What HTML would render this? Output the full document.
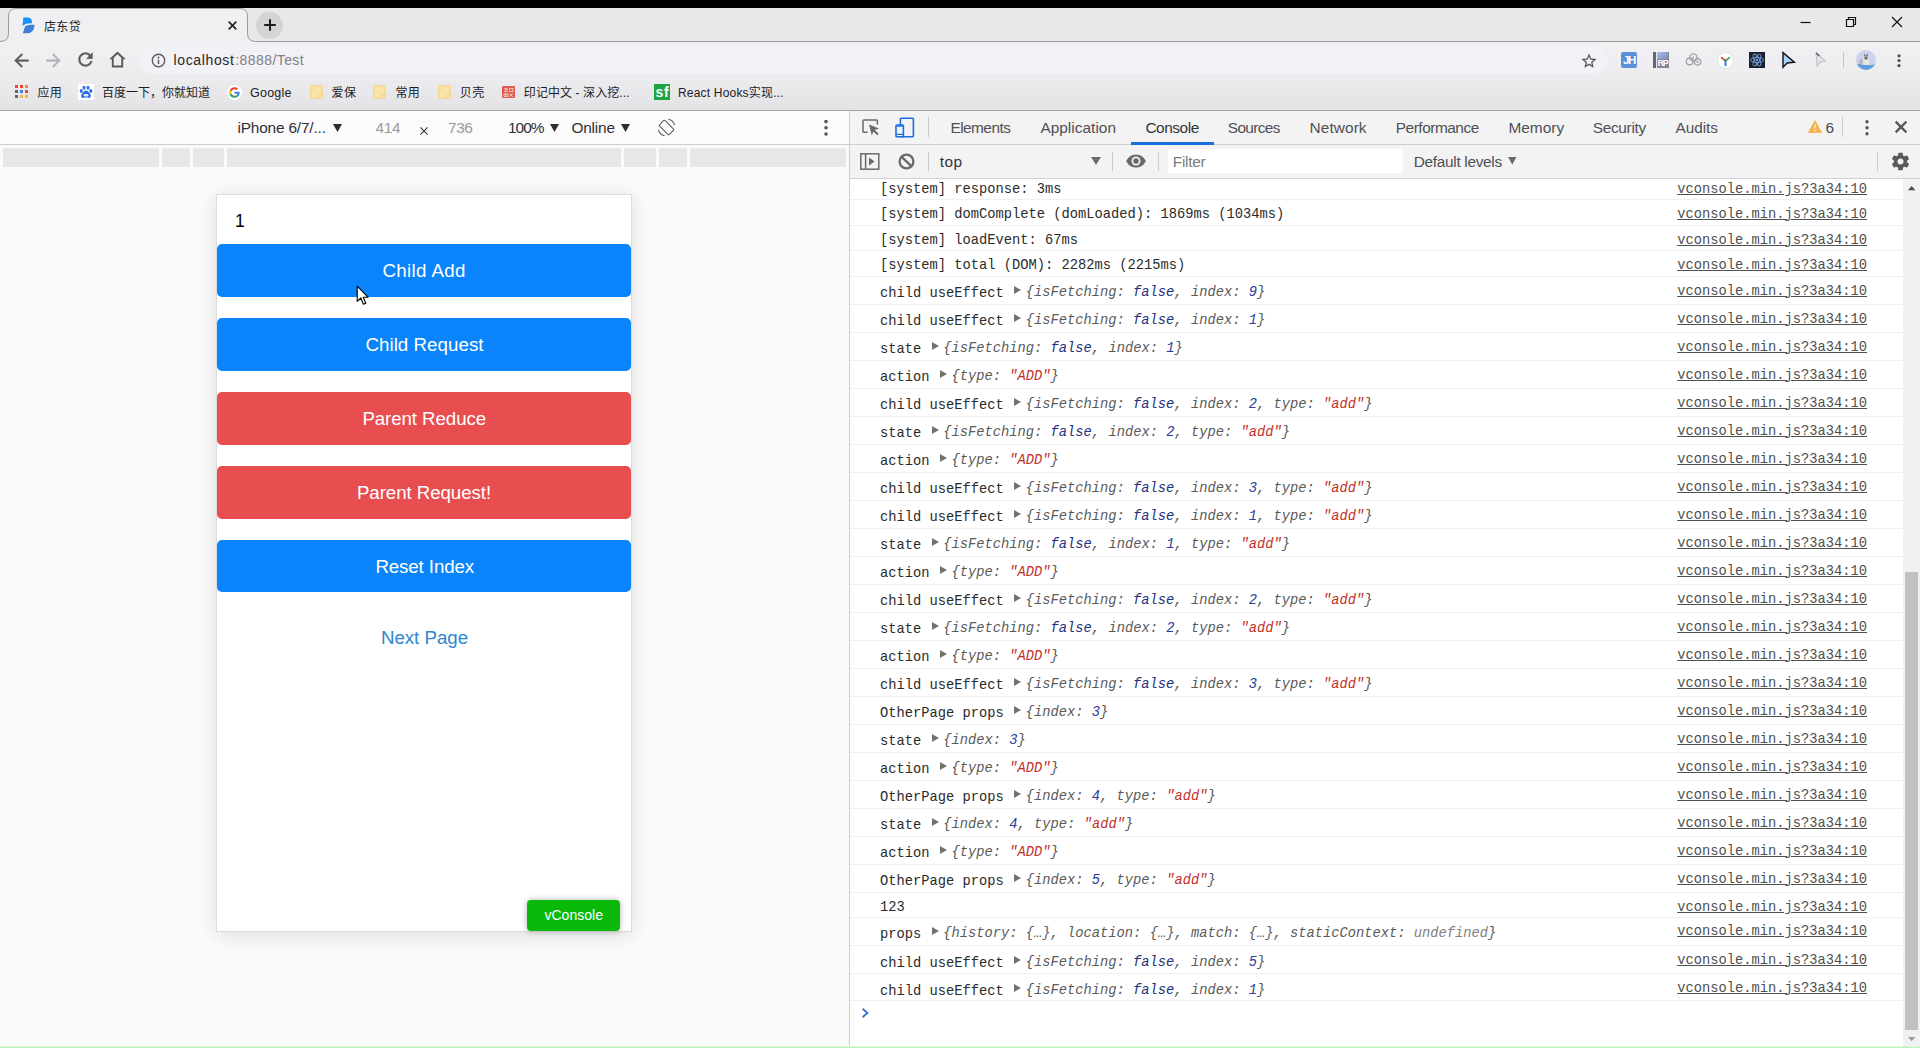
<!DOCTYPE html>
<html lang="zh"><head><meta charset="utf-8"><title>店东贷</title>
<style>
*{margin:0;padding:0;box-sizing:border-box}
html,body{width:1920px;height:1048px;overflow:hidden;background:#fff}
body{position:relative;font-family:"Liberation Sans","Noto Sans CJK SC",sans-serif}
.a{position:absolute}
.t{position:absolute;white-space:pre;display:block}
svg{position:absolute;overflow:visible}
.m{position:absolute;white-space:pre;font-family:"Liberation Mono","Noto Sans CJK SC",monospace;font-size:13.75px;line-height:16px;color:#2b2b2b}
.m i{color:#555}
.m .k{color:#5a5a5a}
.m .b{color:#22307c}
.m .n{color:#2a3c9c}
.m .s{color:#c2302a}
.m .u{color:#808080}
.lk{position:absolute;white-space:pre;font-family:"Liberation Mono",monospace;font-size:13.75px;line-height:16px;color:#4f4f4f;text-decoration:underline;right:53px}
.hl{position:absolute;left:850px;width:1053px;height:1px;background:#f0f0f2}
.tri{position:absolute;width:0;height:0;border-left:7.4px solid #727272;border-top:4.5px solid transparent;border-bottom:4.5px solid transparent}
.btn{position:absolute;left:217px;width:414px;height:52.6px;border-radius:5px}
.sep{position:absolute;width:1px;background:#cbcbcb}
</style></head><body>
<div class="a" style="left:0;top:0;width:1920px;height:8px;background:#000"></div><div class="a" style="left:0;top:8px;width:1920px;height:34px;background:#e8e7ea"></div><div class="a" style="left:0;top:42px;width:1920px;height:68px;background:linear-gradient(#f0eff2 0,#eeedf0 40%,#e9e8eb 70%,#e3e2e5 100%)"></div><svg style="left:0;top:0" width="1920" height="48"><path d="M0,41.5 Q8.5,41.5 8.5,33.5 L8.5,16.5 Q8.5,8.5 16.5,8.5 L239.5,8.5 Q247.5,8.5 247.5,16.5 L247.5,33.5 Q247.5,41.5 255.5,41.5 L255.5,42.5 L0,42.5 Z" fill="#f0eff2"/><path d="M0,41.5 Q8.5,41.5 8.5,33.5 L8.5,16.5 Q8.5,8.5 16.5,8.5 L239.5,8.5 Q247.5,8.5 247.5,16.5 L247.5,33.5 Q247.5,41.5 255.5,41.5 L1920,41.5" fill="none" stroke="#9a999c" stroke-width="1"/></svg><svg style="left:21px;top:16.6px" width="15" height="17.4" viewBox="0 0 15 18"><path d="M2.2,0.6 H6.2 C10.2,0.6 11.4,3.4 11.2,6.6 C7,6.4 3.6,7.2 1.2,9.2 C1.6,6.6 1.9,3.4 2.2,0.6 Z" fill="#1890ff"/><path d="M4.2,9.4 C7.4,8.2 10.6,7.8 13.6,8.0 C13.8,12.4 11.6,16.6 6.4,16.8 H1.6 Z" fill="#3f7fd6"/></svg><span class="t" style="left:43.90px;top:20.80px;font-size:12px;line-height:12px;color:#1f1f1f;letter-spacing:0.394px;">店东贷</span><svg style="left:227.5px;top:20.8px" width="9" height="9" viewBox="0 0 9 9"><path d="M0.7,0.7 L8.3,8.3 M8.3,0.7 L0.7,8.3" stroke="#2a2a2a" stroke-width="1.8"/></svg><div class="a" style="left:256.4px;top:11.5px;width:27px;height:27px;border-radius:14px;background:#d4d3d6"></div><svg style="left:263.9px;top:19px" width="12" height="12" viewBox="0 0 12 12"><path d="M6,0.2 V11.8 M0.2,6 H11.8" stroke="#1d1d1d" stroke-width="2"/></svg><svg style="left:1795px;top:12px" width="120" height="22" viewBox="0 0 120 22"><path d="M5.5,10.5 H15.5" stroke="#111" stroke-width="1.2"/><path d="M51.5,7.5 H58.5 V14.5 H51.5 Z M53.5,7.5 V5.5 H60.5 V12.5 H58.5" fill="none" stroke="#111" stroke-width="1.2"/><path d="M97,5 L107,15 M107,5 L97,15" stroke="#111" stroke-width="1.2"/></svg><svg style="left:11px;top:49.5px" width="21" height="21" viewBox="0 0 24 24"><path stroke="#5b5b5e" stroke-width="0.4" fill="#5b5b5e" d="M20 11H7.83l5.59-5.59L12 4l-8 8 8 8 1.41-1.41L7.83 13H20v-2z"/></svg><svg style="left:43px;top:49.5px" width="21" height="21" viewBox="0 0 24 24"><path stroke="#b3b2b7" stroke-width="0.4" fill="#b3b2b7" d="M12 4l-1.41 1.41L16.17 11H4v2h12.17l-5.58 5.59L12 20l8-8z"/></svg><svg style="left:75px;top:49.3px" width="21" height="21" viewBox="0 0 24 24"><path stroke="#5b5b5e" stroke-width="0.4" fill="#5b5b5e" d="M17.65 6.35C16.2 4.9 14.21 4 12 4c-4.42 0-7.99 3.58-7.99 8s3.57 8 7.99 8c3.73 0 6.84-2.55 7.73-6h-2.08c-.82 2.33-3.04 4-5.65 4-3.31 0-6-2.69-6-6s2.69-6 6-6c1.66 0 3.14.69 4.22 1.78L13 11h7V4l-2.35 2.35z"/></svg><svg style="left:107.3px;top:49.2px" width="21" height="22.4" viewBox="0 0 24 25.6"><path fill="#5b5b5e" fill-rule="evenodd" d="M12 3L2.4 11.8h3.1V21.2h13v-9.4h3.1L12 3z M12 6l4.3 3.9V19H7.7V9.9L12 6z"/></svg><div class="a" style="left:140px;top:46px;width:1467px;height:28px;border-radius:14px;background:#f2f1f5"></div><svg style="left:150.5px;top:52.5px" width="15" height="15" viewBox="0 0 15 15"><circle cx="7.5" cy="7.5" r="6.2" fill="none" stroke="#5b5b5e" stroke-width="1.4"/><path d="M7.5,6.6 V11" stroke="#5b5b5e" stroke-width="1.5"/><circle cx="7.5" cy="4.5" r="0.95" fill="#5b5b5e"/></svg><span class="t" style="left:173.60px;top:53.30px;font-size:14px;line-height:14px;color:#27272a;letter-spacing:0.628px;">localhost</span><span class="t" style="left:235.20px;top:53.30px;font-size:14px;line-height:14px;color:#808086;letter-spacing:0.431px;">:8888/Test</span><svg style="left:1580px;top:51.5px" width="18" height="18" viewBox="0 0 24 24"><path fill="#4d4d50" d="M22 9.24l-7.19-.62L12 2 9.19 8.63 2 9.24l5.46 4.73L5.82 21 12 17.27 18.18 21l-1.63-7.03L22 9.24zM12 15.4l-3.76 2.27 1-4.28-3.32-2.88 4.38-.38L12 6.1l1.71 4.04 4.38.38-3.32 2.88 1 4.28L12 15.4z"/></svg><div class="a" style="left:1621px;top:52px;width:16px;height:16px;border-radius:2px;background:#5a90d6"></div><span class="t" style="left:1623.00px;top:54.65px;font-size:11.5px;line-height:11.5px;color:#fff;font-weight:700;letter-spacing:-1.402px;">JH</span><div class="a" style="left:1652.6px;top:51.6px;width:17px;height:17px;background:#f3e6f3"></div><div class="a" style="left:1653px;top:52px;width:16px;height:16px;background:#84889c"></div><div class="a" style="left:1653px;top:52px;width:3px;height:16px;background:#66676c"></div><div class="a" style="left:1656px;top:52px;width:1px;height:16px;background:#e9e6ee"></div><div class="a" style="left:1657.4px;top:52.4px;width:11px;height:7px;background:linear-gradient(135deg,#a9bdf0,#7d8db4)"></div><span class="t" style="left:1657.40px;top:59.40px;font-size:9px;line-height:9px;color:#fff;font-weight:700;letter-spacing:-1.144px;">RP</span><svg style="left:1685px;top:52px" width="17" height="16" viewBox="0 0 17 16"><g fill="none" stroke="#a3a2a7" stroke-width="1.3"><circle cx="4.6" cy="9.6" r="3.4"/><circle cx="8.4" cy="5.4" r="3.6"/><circle cx="12.6" cy="9.8" r="3.2"/></g><circle cx="12.6" cy="9.8" r="1.1" fill="#9a999e"/><circle cx="8.2" cy="5.6" r="1" fill="#9a999e"/></svg><svg style="left:1716.5px;top:51.5px" width="17" height="17" viewBox="0 0 17 17"><circle cx="8.5" cy="8.5" r="8" fill="#fff" stroke="#d8d7da" stroke-width="0.8"/><path d="M8.5,8.8 L4.6,5.6" stroke="#d8463b" stroke-width="1.8" stroke-linecap="round"/><path d="M8.5,8.8 L12.4,5.6" stroke="#3aa657" stroke-width="1.8" stroke-linecap="round"/><path d="M8.5,8.8 V13.4" stroke="#2f7be0" stroke-width="1.9" stroke-linecap="round"/></svg><svg style="left:1749px;top:52px" width="16" height="16" viewBox="0 0 16 16"><rect width="16" height="16" fill="#1d1f27"/><g fill="none" stroke="#6fa3e4" stroke-width="0.9"><ellipse cx="8" cy="8" rx="6.6" ry="2.5"/><ellipse cx="8" cy="8" rx="6.6" ry="2.5" transform="rotate(60 8 8)"/><ellipse cx="8" cy="8" rx="6.6" ry="2.5" transform="rotate(120 8 8)"/></g><circle cx="8" cy="8" r="1.3" fill="#6fa3e4"/></svg><svg style="left:1781px;top:51px" width="16" height="18" viewBox="0 0 16 18"><path d="M2,1.6 L13.4,11.2 L6.2,12 L2,16.2 Z" fill="#a6d2f4" stroke="#111116" stroke-width="1.4" stroke-linejoin="miter"/></svg><svg style="left:1813px;top:51px" width="16" height="18" viewBox="0 0 16 18"><path d="M3,2 L12.6,10.2 L7.4,10.6 L4.2,15.2 Z" fill="#e4e4ea" stroke="#c3c2c8" stroke-width="1.1" stroke-linejoin="round"/><path d="M3,2 L6.5,5" stroke="#55555c" stroke-width="1.4"/></svg><div class="sep" style="left:1843px;top:52px;height:16px;background:#c6c5c9"></div><svg style="left:1856px;top:50px" width="20" height="20" viewBox="0 0 20 20"><defs><clipPath id="av"><circle cx="10" cy="10" r="10"/></clipPath></defs><g clip-path="url(#av)"><rect width="20" height="20" fill="#ccd1ee"/><path d="M0,15 Q5,13 10,14.5 T20,14 V20 H0 Z" fill="#5f9fe0"/><ellipse cx="5.5" cy="12" rx="2.6" ry="2.8" fill="#b9b9c2"/><path d="M7,15 C6.5,10 7.5,6 10,5.5 C12.5,6 13.5,10 13,15 Z" fill="#e9e4de"/><path d="M8.2,6.6 L8.6,3.6 L9.8,5.8 Z M11.8,6.6 L11.4,3.6 L10.2,5.8 Z" fill="#5a5560"/><ellipse cx="10" cy="8" rx="1.7" ry="1.8" fill="#6c6770"/></g></svg><svg style="left:1895.5px;top:53px" width="6" height="16" viewBox="0 0 6 16"><circle cx="3" cy="2.8" r="1.6" fill="#4d4d50"/><circle cx="3" cy="7.6" r="1.6" fill="#4d4d50"/><circle cx="3" cy="12.6" r="1.6" fill="#4d4d50"/></svg><svg style="left:15px;top:84.5px" width="13" height="13" viewBox="0 0 13 13"><rect x="0" y="0" width="3" height="3" fill="#e04a3f"/><rect x="5" y="0" width="3" height="3" fill="#e04a3f"/><rect x="10" y="0" width="3" height="3" fill="#e88a3c"/><rect x="0" y="5" width="3" height="3" fill="#5b6770"/><rect x="5" y="5" width="3" height="3" fill="#3f7fe0"/><rect x="10" y="5" width="3" height="3" fill="#e04a3f"/><rect x="0" y="10" width="3" height="3" fill="#5b6770"/><rect x="5" y="10" width="3" height="3" fill="#f0b44a"/><rect x="10" y="10" width="3" height="3" fill="#f0b44a"/></svg><span class="t" style="left:37.40px;top:87.20px;font-size:12px;line-height:12px;color:#1d1d1f;letter-spacing:0.456px;">应用</span><svg style="left:78px;top:84px" width="16" height="16" viewBox="0 0 16 16"><rect width="16" height="16" fill="#fff"/><g fill="#2d6be8"><ellipse cx="3.2" cy="7" rx="1.5" ry="2"/><ellipse cx="6" cy="3.8" rx="1.5" ry="2"/><ellipse cx="10" cy="3.8" rx="1.5" ry="2"/><ellipse cx="12.8" cy="7" rx="1.5" ry="2"/><path d="M8,6.6 C10,6.6 11,8.6 12.2,10 C13.6,11.6 12.8,14 10.8,14 C9.6,14 9,13.6 8,13.6 C7,13.6 6.4,14 5.2,14 C3.2,14 2.4,11.6 3.8,10 C5,8.6 6,6.6 8,6.6 Z"/></g><rect x="5.6" y="10" width="4.8" height="2.6" rx="0.8" fill="#fff" opacity="0.85"/></svg><span class="t" style="left:101.90px;top:87.20px;font-size:12px;line-height:12px;color:#1d1d1f;letter-spacing:0.010px;">百度一下，你就知道</span><svg style="left:226.5px;top:84.5px" width="15" height="15" viewBox="0 0 48 48"><circle cx="24" cy="24" r="24" fill="#fff"/><g transform="translate(7 7) scale(0.71)"><path fill="#EA4335" d="M24 9.5c3.54 0 6.71 1.22 9.21 3.6l6.85-6.85C35.9 2.38 30.47 0 24 0 14.62 0 6.51 5.38 2.56 13.22l7.98 6.19C12.43 13.72 17.74 9.5 24 9.5z"/><path fill="#4285F4" d="M46.98 24.55c0-1.57-.15-3.09-.38-4.55H24v9.02h12.94c-.58 2.96-2.26 5.48-4.78 7.18l7.73 6c4.51-4.18 7.09-10.36 7.09-17.65z"/><path fill="#FBBC05" d="M10.53 28.59c-.48-1.45-.76-2.99-.76-4.59s.27-3.14.76-4.59l-7.98-6.19C.92 16.46 0 20.12 0 24c0 3.88.92 7.54 2.56 10.78l7.97-6.19z"/><path fill="#34A853" d="M24 48c6.48 0 11.93-2.13 15.89-5.81l-7.73-6c-2.15 1.45-4.92 2.3-8.16 2.3-6.26 0-11.57-4.22-13.47-9.91l-7.98 6.19C6.51 42.62 14.62 48 24 48z"/></g></svg><span class="t" style="left:250.00px;top:86.75px;font-size:12.5px;line-height:12.5px;color:#1d1d1f;letter-spacing:0.234px;">Google</span><svg style="left:309.6px;top:85px" width="13" height="14" viewBox="0 0 13 14"><path d="M0.8,0.8 H12.2 V13.2 H0.8 Z" fill="#fbe5a6" stroke="#f3cf7c" stroke-width="1"/><path d="M9.2,13 V10 H12" fill="none" stroke="#f3cf7c" stroke-width="1"/></svg><span class="t" style="left:331.40px;top:87.20px;font-size:12px;line-height:12px;color:#1d1d1f;letter-spacing:0.656px;">爱保</span><svg style="left:373px;top:85px" width="13" height="14" viewBox="0 0 13 14"><path d="M0.8,0.8 H12.2 V13.2 H0.8 Z" fill="#fbe5a6" stroke="#f3cf7c" stroke-width="1"/><path d="M9.2,13 V10 H12" fill="none" stroke="#f3cf7c" stroke-width="1"/></svg><span class="t" style="left:395.40px;top:87.20px;font-size:12px;line-height:12px;color:#1d1d1f;letter-spacing:0.390px;">常用</span><svg style="left:437.6px;top:85px" width="13" height="14" viewBox="0 0 13 14"><path d="M0.8,0.8 H12.2 V13.2 H0.8 Z" fill="#fbe5a6" stroke="#f3cf7c" stroke-width="1"/><path d="M9.2,13 V10 H12" fill="none" stroke="#f3cf7c" stroke-width="1"/></svg><span class="t" style="left:459.80px;top:87.20px;font-size:12px;line-height:12px;color:#1d1d1f;letter-spacing:0.523px;">贝壳</span><svg style="left:501.5px;top:86px" width="13" height="12" viewBox="0 0 13 12"><rect width="13" height="12" rx="1" fill="#e0584e"/><g stroke="#f7d8d4" stroke-width="0.9" fill="none"><path d="M2,3 H6 M2,5.6 H6 M4,2 V5.6 M7.6,2.4 H11 V5.6 H7.6 Z M2,8 H6 V10.4 H2 Z M4,7 V11 M7.4,7.4 L11,10.8 M11,7.4 L7.4,10.8"/></g></svg><span class="t" style="left:523.80px;top:87.20px;font-size:12px;line-height:12px;color:#1d1d1f;letter-spacing:0.090px;">印记中文 - 深入挖...</span><div class="a" style="left:654px;top:84px;width:16px;height:16px;background:#1ea446"></div><span class="t" style="left:655.40px;top:85.00px;font-size:14px;line-height:14px;color:#fff;font-weight:700;letter-spacing:0.765px;">sf</span><span class="t" style="left:678.00px;top:87.20px;font-size:12px;line-height:12px;color:#1d1d1f;letter-spacing:0.187px;">React Hooks实现...</span><div class="a" style="left:0;top:110px;width:1920px;height:1px;background:#a6a5a8"></div><div class="a" style="left:0;top:111px;width:849px;height:34px;background:#fbfbfb"></div><div class="a" style="left:0;top:144px;width:849px;height:1px;background:#cfcfcf"></div><div class="a" style="left:0;top:145px;width:849px;height:903px;background:#fafafa"></div><span class="t" style="left:237.40px;top:119.80px;font-size:15.4px;line-height:15.4px;color:#303034;letter-spacing:-0.163px;">iPhone 6/7/...</span><svg style="left:332.5px;top:124px" width="9" height="8" viewBox="0 0 9 8"><path d="M0,0 H9 L4.5,8 Z" fill="#2c2c30"/></svg><span class="t" style="left:375.40px;top:119.80px;font-size:15.4px;line-height:15.4px;color:#9a9a9a;letter-spacing:-0.195px;">414</span><svg style="left:420px;top:126.5px" width="8" height="8" viewBox="0 0 8 8"><path d="M0.4,0.4 L7.6,7.6 M7.6,0.4 L0.4,7.6" stroke="#3a3a3e" stroke-width="1.1"/></svg><span class="t" style="left:448.10px;top:119.80px;font-size:15.4px;line-height:15.4px;color:#9a9a9a;letter-spacing:-0.475px;">736</span><span class="t" style="left:508.00px;top:119.80px;font-size:15.4px;line-height:15.4px;color:#303034;letter-spacing:-0.936px;">100%</span><svg style="left:550px;top:124px" width="9" height="8" viewBox="0 0 9 8"><path d="M0,0 H9 L4.5,8 Z" fill="#2c2c30"/></svg><span class="t" style="left:571.40px;top:119.80px;font-size:15.4px;line-height:15.4px;color:#303034;letter-spacing:-0.164px;">Online</span><svg style="left:621px;top:124px" width="9" height="8" viewBox="0 0 9 8"><path d="M0,0 H9 L4.5,8 Z" fill="#2c2c30"/></svg><svg style="left:657px;top:117.5px" width="19" height="19" viewBox="0 0 19 19"><g fill="none" stroke="#5f5f63" stroke-width="1.1"><rect x="5.6" y="2.6" width="7.8" height="13.8" rx="1.2" transform="rotate(-45 9.5 9.5)"/><path d="M1.4,12 A8.4,8.4 0 0 0 7.6,17.8"/><path d="M17.6,7 A8.4,8.4 0 0 0 11.4,1.2"/></g></svg><svg style="left:822.8px;top:118.8px" width="6" height="18" viewBox="0 0 6 18"><circle cx="3" cy="2.6" r="1.8" fill="#55555a"/><circle cx="3" cy="8.8" r="1.8" fill="#55555a"/><circle cx="3" cy="15" r="1.8" fill="#55555a"/></svg><div class="a" style="left:3px;top:148px;width:156px;height:18.5px;background:#e7e6e9"></div><div class="a" style="left:162px;top:148px;width:28px;height:18.5px;background:#e7e6e9"></div><div class="a" style="left:193px;top:148px;width:31px;height:18.5px;background:#e7e6e9"></div><div class="a" style="left:227.2px;top:148px;width:393.8px;height:18.5px;background:#e7e6e9"></div><div class="a" style="left:624px;top:148px;width:31.6px;height:18.5px;background:#e7e6e9"></div><div class="a" style="left:659px;top:148px;width:28px;height:18.5px;background:#e7e6e9"></div><div class="a" style="left:690px;top:148px;width:156px;height:18.5px;background:#e7e6e9"></div><div class="a" style="left:216px;top:194px;width:416px;height:738px;background:#fff;border:1px solid #dcdcde;box-shadow:0 0 18px rgba(0,0,0,0.07),0 8px 22px rgba(0,0,0,0.05)"></div><span class="t" style="left:235.00px;top:212.75px;font-size:17.5px;line-height:17.5px;color:#000;">1</span><div class="btn" style="top:244px;background:#0a84fa"></div><span class="t" style="left:382.40px;top:262.25px;font-size:18.7px;line-height:18.7px;color:#fff;letter-spacing:0.376px;">Child Add</span><div class="btn" style="top:318px;background:#0a84fa"></div><span class="t" style="left:365.40px;top:336.25px;font-size:18.7px;line-height:18.7px;color:#fff;letter-spacing:0.065px;">Child Request</span><div class="btn" style="top:392px;background:#e84e50"></div><span class="t" style="left:362.40px;top:410.25px;font-size:18.7px;line-height:18.7px;color:#fff;letter-spacing:-0.078px;">Parent Reduce</span><div class="btn" style="top:466px;background:#e84e50"></div><span class="t" style="left:356.90px;top:484.25px;font-size:18.7px;line-height:18.7px;color:#fff;letter-spacing:-0.058px;">Parent Request!</span><div class="btn" style="top:540px;background:#0a84fa;height:51.7px"></div><span class="t" style="left:375.40px;top:558.25px;font-size:18.7px;line-height:18.7px;color:#fff;letter-spacing:-0.099px;">Reset Index</span><span class="t" style="left:380.90px;top:629.45px;font-size:18.7px;line-height:18.7px;color:#2f86cc;letter-spacing:-0.008px;">Next Page</span><div class="a" style="left:527px;top:900px;width:93px;height:30.5px;border-radius:4px;background:#0aba0a;box-shadow:0 0 6px rgba(0,0,0,0.3)"></div><span class="t" style="left:544.40px;top:908.20px;font-size:14px;line-height:14px;color:#fff;letter-spacing:0.043px;">vConsole</span><svg style="left:356px;top:285px" width="14" height="21" viewBox="0 0 14 21"><path d="M1.2,1.2 V16.4 L4.8,13 L7.4,19.2 L9.8,18.2 L7.2,12.2 H12 Z" fill="#fff" stroke="#000" stroke-width="1.1" stroke-linejoin="round"/></svg><div class="a" style="left:849px;top:111px;width:1px;height:937px;background:#cdcdcd"></div><div class="a" style="left:850px;top:111px;width:1070px;height:68px;background:#f3f3f3"></div><div class="a" style="left:850px;top:144px;width:1070px;height:1px;background:#cfcfcf"></div><div class="a" style="left:850px;top:178px;width:1070px;height:1px;background:#d0d0d0"></div><svg style="left:862px;top:119px" width="19" height="17" viewBox="0 0 19 17"><path d="M5.6,13.2 H1.8 A0.8,0.8 0 0 1 1,12.4 V1.8 A0.8,0.8 0 0 1 1.8,1 H14.6 A0.8,0.8 0 0 1 15.4,1.8 V5.6" fill="none" stroke="#6a6a6a" stroke-width="1.5"/><path d="M7,5.6 L17,9.4 L12.8,11 L16.6,14.8 L15.2,16.2 L11.4,12.4 L9.8,16.4 Z" fill="#6a6a6a"/></svg><svg style="left:895px;top:116.5px" width="20" height="21" viewBox="0 0 20 21"><g fill="none" stroke="#1a6fe0" stroke-width="1.6"><rect x="5.4" y="1.2" width="13" height="18.6" rx="1"/><rect x="1" y="8" width="7.4" height="11.8" rx="0.8" fill="#f3f3f3"/></g><path d="M1.6,9 H7.8 M1.6,17.4 H7.8" stroke="#1a6fe0" stroke-width="1.4"/></svg><div class="sep" style="left:928px;top:117px;height:20px"></div><span class="t" style="left:950.40px;top:119.50px;font-size:15.4px;line-height:15.4px;color:#505056;letter-spacing:-0.527px;">Elements</span><span class="t" style="left:1040.40px;top:119.50px;font-size:15.4px;line-height:15.4px;color:#505056;letter-spacing:0.029px;">Application</span><span class="t" style="left:1145.40px;top:119.50px;font-size:15.4px;line-height:15.4px;color:#33333a;letter-spacing:-0.441px;">Console</span><span class="t" style="left:1227.80px;top:119.50px;font-size:15.4px;line-height:15.4px;color:#505056;letter-spacing:-0.626px;">Sources</span><span class="t" style="left:1309.60px;top:119.50px;font-size:15.4px;line-height:15.4px;color:#505056;letter-spacing:0.084px;">Network</span><span class="t" style="left:1395.80px;top:119.50px;font-size:15.4px;line-height:15.4px;color:#505056;letter-spacing:-0.468px;">Performance</span><span class="t" style="left:1508.40px;top:119.50px;font-size:15.4px;line-height:15.4px;color:#505056;letter-spacing:0.037px;">Memory</span><span class="t" style="left:1592.80px;top:119.50px;font-size:15.4px;line-height:15.4px;color:#505056;letter-spacing:-0.321px;">Security</span><span class="t" style="left:1675.60px;top:119.50px;font-size:15.4px;line-height:15.4px;color:#505056;letter-spacing:-0.069px;">Audits</span><div class="a" style="left:1131px;top:142px;width:83px;height:2.6px;background:#1a6fe0"></div><svg style="left:1807.5px;top:120px" width="14" height="13" viewBox="0 0 14 13"><path d="M7,0.8 L13.4,12.4 H0.6 Z" fill="#f6b34f" stroke="#f6b34f" stroke-width="1" stroke-linejoin="round"/><path d="M7,4.2 V8.4" stroke="#fdf0d8" stroke-width="1.3"/><circle cx="7" cy="10.4" r="0.8" fill="#fdf0d8"/></svg><span class="t" style="left:1825.60px;top:119.50px;font-size:15.4px;line-height:15.4px;color:#4a4a50;letter-spacing:-0.363px;">6</span><div class="sep" style="left:1842px;top:117px;height:20px"></div><svg style="left:1863.5px;top:118.6px" width="6" height="18" viewBox="0 0 6 18"><circle cx="3" cy="2.8" r="1.7" fill="#55555a"/><circle cx="3" cy="8.8" r="1.7" fill="#55555a"/><circle cx="3" cy="14.8" r="1.7" fill="#55555a"/></svg><svg style="left:1894.5px;top:121px" width="12" height="12" viewBox="0 0 12 12"><path d="M0.6,0.6 L11.4,11.4 M11.4,0.6 L0.6,11.4" stroke="#55555a" stroke-width="2.2"/></svg><svg style="left:860px;top:153px" width="20" height="17" viewBox="0 0 20 17"><rect x="0.8" y="0.8" width="18" height="15.4" fill="none" stroke="#6a6a6a" stroke-width="1.5"/><path d="M5.6,0.8 V16.2" stroke="#6a6a6a" stroke-width="1.5"/><path d="M9,4.4 L14.6,8.5 L9,12.6 Z" fill="#6a6a6a"/></svg><svg style="left:897.5px;top:153px" width="17" height="17" viewBox="0 0 17 17"><circle cx="8.5" cy="8.5" r="6.9" fill="none" stroke="#6a6a6a" stroke-width="2.3"/><path d="M3.6,3.8 L13.4,13.2" stroke="#6a6a6a" stroke-width="2.3"/></svg><div class="sep" style="left:928px;top:152px;height:19px"></div><span class="t" style="left:939.80px;top:154.00px;font-size:15.4px;line-height:15.4px;color:#33333a;letter-spacing:0.398px;">top</span><svg style="left:1090.5px;top:157px" width="10" height="8" viewBox="0 0 10 8"><path d="M0,0 H10 L5,8 Z" fill="#6a6a6a"/></svg><div class="sep" style="left:1112px;top:152px;height:19px"></div><svg style="left:1125.5px;top:154px" width="20" height="14" viewBox="0 0 20 14"><path d="M10,0.4 C5.4,0.4 1.8,3.2 0.2,7 C1.8,10.8 5.4,13.6 10,13.6 C14.6,13.6 18.2,10.8 19.8,7 C18.2,3.2 14.6,0.4 10,0.4 Z" fill="#6a6a6a"/><circle cx="10" cy="7" r="4.5" fill="#f3f3f3"/><circle cx="10" cy="7" r="2.7" fill="#6a6a6a"/></svg><div class="sep" style="left:1158px;top:152px;height:19px"></div><div class="a" style="left:1168px;top:149px;width:235px;height:24px;background:#fff"></div><span class="t" style="left:1172.80px;top:154.00px;font-size:15.4px;line-height:15.4px;color:#7b7b7b;letter-spacing:-0.255px;">Filter</span><span class="t" style="left:1413.80px;top:154.00px;font-size:15.4px;line-height:15.4px;color:#505056;letter-spacing:-0.310px;">Default levels</span><svg style="left:1508px;top:157px" width="8.5" height="7.5" viewBox="0 0 9 8"><path d="M0,0 H9 L4.5,8 Z" fill="#6a6a6e"/></svg><div class="sep" style="left:1877px;top:152px;height:19px"></div><svg style="left:1889.9px;top:150.6px" width="21" height="21" viewBox="0 0 24 24"><path fill="#5a5a5e" d="M19.43 12.98c.04-.32.07-.64.07-.98s-.03-.66-.07-.98l2.11-1.65c.19-.15.24-.42.12-.64l-2-3.46c-.12-.22-.39-.3-.61-.22l-2.49 1c-.52-.4-1.08-.73-1.69-.98l-.38-2.65C14.46 2.18 14.25 2 14 2h-4c-.25 0-.46.18-.49.42l-.38 2.65c-.61.25-1.17.59-1.69.98l-2.49-1c-.23-.09-.49 0-.61.22l-2 3.46c-.13.22-.07.49.12.64l2.11 1.65c-.04.32-.07.65-.07.98s.03.66.07.98l-2.11 1.65c-.19.15-.24.42-.12.64l2 3.46c.12.22.39.3.61.22l2.49-1c.52.4 1.08.73 1.69.98l.38 2.65c.03.24.24.42.49.42h4c.25 0 .46-.18.49-.42l.38-2.65c.61-.25 1.17-.59 1.69-.98l2.49 1c.23.09.49 0 .61-.22l2-3.46c.12-.22.07-.49-.12-.64l-2.11-1.65zM12 15.5c-1.93 0-3.5-1.57-3.5-3.5s1.57-3.5 3.5-3.5 3.5 1.57 3.5 3.5-1.57 3.5-3.5 3.5z"/></svg><div class="a" style="left:850px;top:179px;width:1053px;height:869px;background:#fff"></div><div class="a" style="left:1903px;top:179px;width:17px;height:869px;background:#f1f1f3"></div><div class="a" style="left:1905px;top:572px;width:13px;height:458px;background:#c1c1c1"></div><svg style="left:1907.8px;top:185.7px" width="7.4" height="4.3" viewBox="0 0 9 5"><path d="M0,5 L4.5,0 L9,5 Z" fill="#4d4d4d"/></svg><svg style="left:1907.8px;top:1037px" width="7.4" height="4.2" viewBox="0 0 9 5"><path d="M0,0 L4.5,5 L9,0 Z" fill="#9a9a9a"/></svg><div class="hl" style="top:199px"></div><div class="m" style="left:880px;top:182.24px">[system] response: 3ms</div><div class="lk" style="top:182.24px">vconsole.min.js?3a34:10</div><div class="hl" style="top:225px"></div><div class="m" style="left:880px;top:206.74px">[system] domComplete (domLoaded): 1869ms (1034ms)</div><div class="lk" style="top:206.74px">vconsole.min.js?3a34:10</div><div class="hl" style="top:250px"></div><div class="m" style="left:880px;top:232.64px">[system] loadEvent: 67ms</div><div class="lk" style="top:232.64px">vconsole.min.js?3a34:10</div><div class="hl" style="top:276px"></div><div class="m" style="left:880px;top:257.54px">[system] total (DOM): 2282ms (2215ms)</div><div class="lk" style="top:257.54px">vconsole.min.js?3a34:10</div><div class="hl" style="top:304px"></div><div class="m" style="left:880px;top:286.04px">child useEffect</div><div class="tri" style="left:1014.10px;top:286.00px"></div><div class="m" style="left:1025.80px;top:285.14px"><i>{<span class="k">isFetching: </span><span class="b">false</span>, <span class="k">index: </span><span class="n">9</span>}</i></div><div class="lk" style="top:283.64px">vconsole.min.js?3a34:10</div><div class="hl" style="top:332px"></div><div class="m" style="left:880px;top:314.04px">child useEffect</div><div class="tri" style="left:1014.10px;top:314.00px"></div><div class="m" style="left:1025.80px;top:313.14px"><i>{<span class="k">isFetching: </span><span class="b">false</span>, <span class="k">index: </span><span class="n">1</span>}</i></div><div class="lk" style="top:311.64px">vconsole.min.js?3a34:10</div><div class="hl" style="top:360px"></div><div class="m" style="left:880px;top:342.04px">state</div><div class="tri" style="left:931.60px;top:342.00px"></div><div class="m" style="left:943.30px;top:341.14px"><i>{<span class="k">isFetching: </span><span class="b">false</span>, <span class="k">index: </span><span class="n">1</span>}</i></div><div class="lk" style="top:339.64px">vconsole.min.js?3a34:10</div><div class="hl" style="top:388px"></div><div class="m" style="left:880px;top:370.04px">action</div><div class="tri" style="left:939.85px;top:370.00px"></div><div class="m" style="left:951.55px;top:369.14px"><i>{<span class="k">type: </span><span class="s">&quot;ADD&quot;</span>}</i></div><div class="lk" style="top:367.64px">vconsole.min.js?3a34:10</div><div class="hl" style="top:416px"></div><div class="m" style="left:880px;top:398.04px">child useEffect</div><div class="tri" style="left:1014.10px;top:398.00px"></div><div class="m" style="left:1025.80px;top:397.14px"><i>{<span class="k">isFetching: </span><span class="b">false</span>, <span class="k">index: </span><span class="n">2</span>, <span class="k">type: </span><span class="s">&quot;add&quot;</span>}</i></div><div class="lk" style="top:395.64px">vconsole.min.js?3a34:10</div><div class="hl" style="top:444px"></div><div class="m" style="left:880px;top:426.04px">state</div><div class="tri" style="left:931.60px;top:426.00px"></div><div class="m" style="left:943.30px;top:425.14px"><i>{<span class="k">isFetching: </span><span class="b">false</span>, <span class="k">index: </span><span class="n">2</span>, <span class="k">type: </span><span class="s">&quot;add&quot;</span>}</i></div><div class="lk" style="top:423.64px">vconsole.min.js?3a34:10</div><div class="hl" style="top:472px"></div><div class="m" style="left:880px;top:454.04px">action</div><div class="tri" style="left:939.85px;top:454.00px"></div><div class="m" style="left:951.55px;top:453.14px"><i>{<span class="k">type: </span><span class="s">&quot;ADD&quot;</span>}</i></div><div class="lk" style="top:451.64px">vconsole.min.js?3a34:10</div><div class="hl" style="top:500px"></div><div class="m" style="left:880px;top:482.04px">child useEffect</div><div class="tri" style="left:1014.10px;top:482.00px"></div><div class="m" style="left:1025.80px;top:481.14px"><i>{<span class="k">isFetching: </span><span class="b">false</span>, <span class="k">index: </span><span class="n">3</span>, <span class="k">type: </span><span class="s">&quot;add&quot;</span>}</i></div><div class="lk" style="top:479.64px">vconsole.min.js?3a34:10</div><div class="hl" style="top:528px"></div><div class="m" style="left:880px;top:510.04px">child useEffect</div><div class="tri" style="left:1014.10px;top:510.00px"></div><div class="m" style="left:1025.80px;top:509.14px"><i>{<span class="k">isFetching: </span><span class="b">false</span>, <span class="k">index: </span><span class="n">1</span>, <span class="k">type: </span><span class="s">&quot;add&quot;</span>}</i></div><div class="lk" style="top:507.64px">vconsole.min.js?3a34:10</div><div class="hl" style="top:556px"></div><div class="m" style="left:880px;top:538.04px">state</div><div class="tri" style="left:931.60px;top:538.00px"></div><div class="m" style="left:943.30px;top:537.14px"><i>{<span class="k">isFetching: </span><span class="b">false</span>, <span class="k">index: </span><span class="n">1</span>, <span class="k">type: </span><span class="s">&quot;add&quot;</span>}</i></div><div class="lk" style="top:535.64px">vconsole.min.js?3a34:10</div><div class="hl" style="top:584px"></div><div class="m" style="left:880px;top:566.04px">action</div><div class="tri" style="left:939.85px;top:566.00px"></div><div class="m" style="left:951.55px;top:565.14px"><i>{<span class="k">type: </span><span class="s">&quot;ADD&quot;</span>}</i></div><div class="lk" style="top:563.64px">vconsole.min.js?3a34:10</div><div class="hl" style="top:612px"></div><div class="m" style="left:880px;top:594.04px">child useEffect</div><div class="tri" style="left:1014.10px;top:594.00px"></div><div class="m" style="left:1025.80px;top:593.14px"><i>{<span class="k">isFetching: </span><span class="b">false</span>, <span class="k">index: </span><span class="n">2</span>, <span class="k">type: </span><span class="s">&quot;add&quot;</span>}</i></div><div class="lk" style="top:591.64px">vconsole.min.js?3a34:10</div><div class="hl" style="top:640px"></div><div class="m" style="left:880px;top:622.04px">state</div><div class="tri" style="left:931.60px;top:622.00px"></div><div class="m" style="left:943.30px;top:621.14px"><i>{<span class="k">isFetching: </span><span class="b">false</span>, <span class="k">index: </span><span class="n">2</span>, <span class="k">type: </span><span class="s">&quot;add&quot;</span>}</i></div><div class="lk" style="top:619.64px">vconsole.min.js?3a34:10</div><div class="hl" style="top:668px"></div><div class="m" style="left:880px;top:650.04px">action</div><div class="tri" style="left:939.85px;top:650.00px"></div><div class="m" style="left:951.55px;top:649.14px"><i>{<span class="k">type: </span><span class="s">&quot;ADD&quot;</span>}</i></div><div class="lk" style="top:647.64px">vconsole.min.js?3a34:10</div><div class="hl" style="top:696px"></div><div class="m" style="left:880px;top:678.04px">child useEffect</div><div class="tri" style="left:1014.10px;top:678.00px"></div><div class="m" style="left:1025.80px;top:677.14px"><i>{<span class="k">isFetching: </span><span class="b">false</span>, <span class="k">index: </span><span class="n">3</span>, <span class="k">type: </span><span class="s">&quot;add&quot;</span>}</i></div><div class="lk" style="top:675.64px">vconsole.min.js?3a34:10</div><div class="hl" style="top:724px"></div><div class="m" style="left:880px;top:706.04px">OtherPage props</div><div class="tri" style="left:1014.10px;top:706.00px"></div><div class="m" style="left:1025.80px;top:705.14px"><i>{<span class="k">index: </span><span class="n">3</span>}</i></div><div class="lk" style="top:703.64px">vconsole.min.js?3a34:10</div><div class="hl" style="top:752px"></div><div class="m" style="left:880px;top:734.04px">state</div><div class="tri" style="left:931.60px;top:734.00px"></div><div class="m" style="left:943.30px;top:733.14px"><i>{<span class="k">index: </span><span class="n">3</span>}</i></div><div class="lk" style="top:731.64px">vconsole.min.js?3a34:10</div><div class="hl" style="top:780px"></div><div class="m" style="left:880px;top:762.04px">action</div><div class="tri" style="left:939.85px;top:762.00px"></div><div class="m" style="left:951.55px;top:761.14px"><i>{<span class="k">type: </span><span class="s">&quot;ADD&quot;</span>}</i></div><div class="lk" style="top:759.64px">vconsole.min.js?3a34:10</div><div class="hl" style="top:808px"></div><div class="m" style="left:880px;top:790.04px">OtherPage props</div><div class="tri" style="left:1014.10px;top:790.00px"></div><div class="m" style="left:1025.80px;top:789.14px"><i>{<span class="k">index: </span><span class="n">4</span>, <span class="k">type: </span><span class="s">&quot;add&quot;</span>}</i></div><div class="lk" style="top:787.64px">vconsole.min.js?3a34:10</div><div class="hl" style="top:836px"></div><div class="m" style="left:880px;top:818.04px">state</div><div class="tri" style="left:931.60px;top:818.00px"></div><div class="m" style="left:943.30px;top:817.14px"><i>{<span class="k">index: </span><span class="n">4</span>, <span class="k">type: </span><span class="s">&quot;add&quot;</span>}</i></div><div class="lk" style="top:815.64px">vconsole.min.js?3a34:10</div><div class="hl" style="top:864px"></div><div class="m" style="left:880px;top:846.04px">action</div><div class="tri" style="left:939.85px;top:846.00px"></div><div class="m" style="left:951.55px;top:845.14px"><i>{<span class="k">type: </span><span class="s">&quot;ADD&quot;</span>}</i></div><div class="lk" style="top:843.64px">vconsole.min.js?3a34:10</div><div class="hl" style="top:892px"></div><div class="m" style="left:880px;top:874.04px">OtherPage props</div><div class="tri" style="left:1014.10px;top:874.00px"></div><div class="m" style="left:1025.80px;top:873.14px"><i>{<span class="k">index: </span><span class="n">5</span>, <span class="k">type: </span><span class="s">&quot;add&quot;</span>}</i></div><div class="lk" style="top:871.64px">vconsole.min.js?3a34:10</div><div class="hl" style="top:917px"></div><div class="m" style="left:880px;top:900.04px">123</div><div class="lk" style="top:900.04px">vconsole.min.js?3a34:10</div><div class="hl" style="top:945px"></div><div class="m" style="left:880px;top:927.34px">props</div><div class="tri" style="left:931.60px;top:927.30px"></div><div class="m" style="left:943.30px;top:926.44px"><i>{<span class="k">history: </span><span class="k">{…}</span>, <span class="k">location: </span><span class="k">{…}</span>, <span class="k">match: </span><span class="k">{…}</span>, <span class="k">staticContext: </span><span class="u">undefined</span>}</i></div><div class="lk" style="top:923.94px">vconsole.min.js?3a34:10</div><div class="hl" style="top:973px"></div><div class="m" style="left:880px;top:955.94px">child useEffect</div><div class="tri" style="left:1014.10px;top:955.90px"></div><div class="m" style="left:1025.80px;top:955.04px"><i>{<span class="k">isFetching: </span><span class="b">false</span>, <span class="k">index: </span><span class="n">5</span>}</i></div><div class="lk" style="top:952.54px">vconsole.min.js?3a34:10</div><div class="hl" style="top:1000px"></div><div class="m" style="left:880px;top:984.04px">child useEffect</div><div class="tri" style="left:1014.10px;top:984.00px"></div><div class="m" style="left:1025.80px;top:983.14px"><i>{<span class="k">isFetching: </span><span class="b">false</span>, <span class="k">index: </span><span class="n">1</span>}</i></div><div class="lk" style="top:980.64px">vconsole.min.js?3a34:10</div><svg style="left:861px;top:1008.4px" width="8" height="10" viewBox="0 0 8 10"><path d="M1.6,0.8 L6.4,5 L1.6,9.2" fill="none" stroke="#3572cf" stroke-width="1.8"/></svg><div class="a" style="left:0;top:1046px;width:1920px;height:1px;background:#def9de"></div><div class="a" style="left:0;top:1047px;width:1920px;height:1px;background:#b6f3b6"></div></body></html>
